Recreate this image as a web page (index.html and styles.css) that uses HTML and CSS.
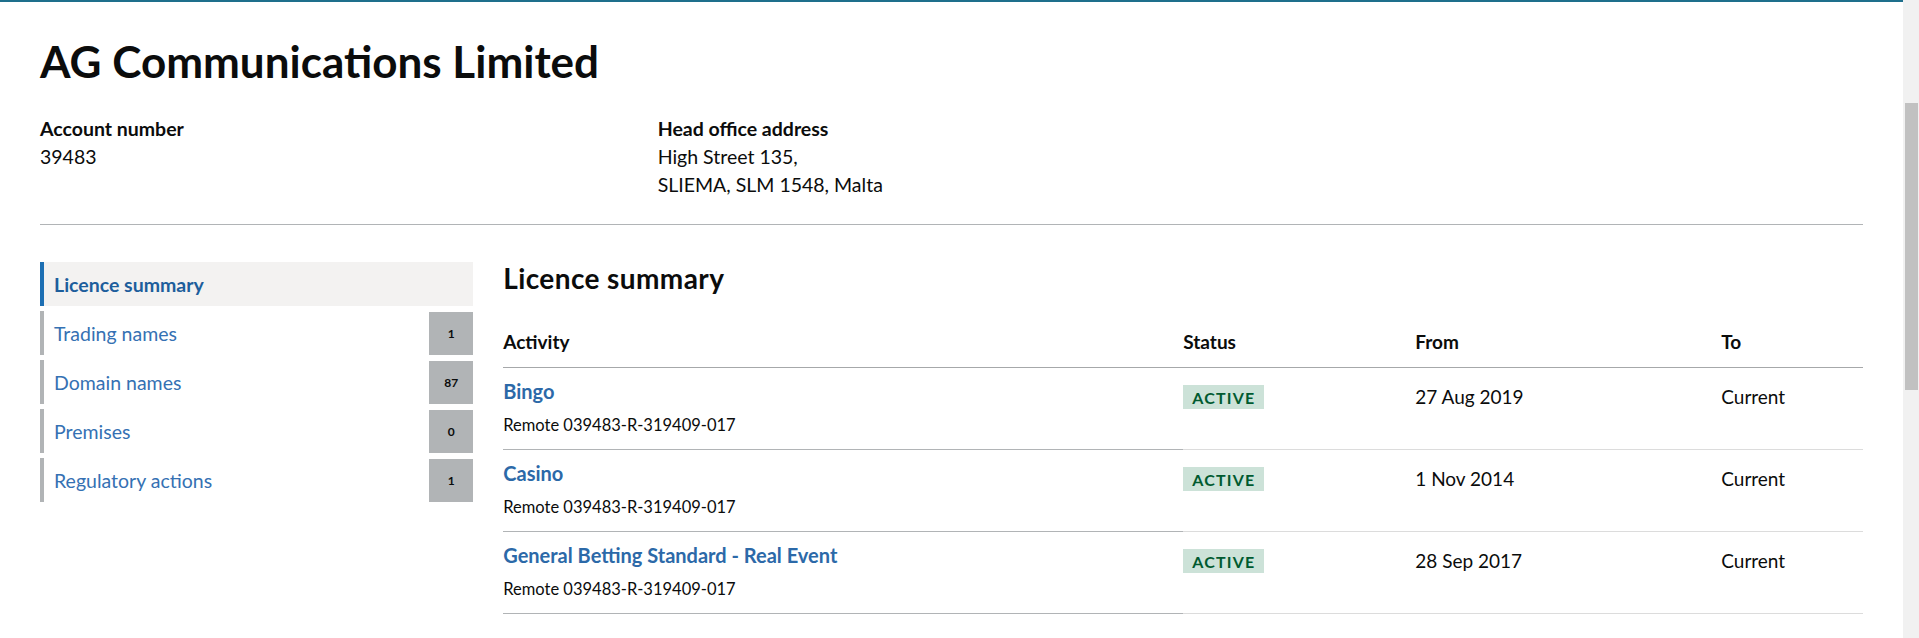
FILE: index.html
```html
<!DOCTYPE html>
<html lang="en">
<head>
<meta charset="utf-8">
<title>AG Communications Limited</title>
<link rel="stylesheet" href="styles.css">
</head>
<body>
<div class="window">
  <div class="page">
    <div class="topbar"></div>
    <div class="container">
      <h1 class="title">AG Communications Limited</h1>
      <div class="details">
        <div class="detail">
          <div class="detail-label">Account number</div>
          <div class="detail-value">39483</div>
        </div>
        <div class="detail">
          <div class="detail-label">Head office address</div>
          <div class="detail-value">High Street 135,<br>SLIEMA, SLM 1548, Malta</div>
        </div>
      </div>
      <hr class="divider">
      <div class="layout">
        <nav class="sidenav">
          <a class="nav-item active" href="#"><span class="nav-text">Licence summary</span></a>
          <a class="nav-item" href="#"><span class="nav-text">Trading names</span><span class="count">1</span></a>
          <a class="nav-item" href="#"><span class="nav-text">Domain names</span><span class="count">87</span></a>
          <a class="nav-item" href="#"><span class="nav-text">Premises</span><span class="count">0</span></a>
          <a class="nav-item" href="#"><span class="nav-text">Regulatory actions</span><span class="count">1</span></a>
        </nav>
        <main class="main">
          <h2 class="section-title">Licence summary</h2>
          <table class="licences">
            <thead>
              <tr>
                <th class="col-activity">Activity</th>
                <th class="col-status">Status</th>
                <th class="col-from">From</th>
                <th class="col-to">To</th>
              </tr>
            </thead>
            <tbody>
              <tr>
                <td class="cell-activity"><a class="activity-link" href="#">Bingo</a><div class="ref">Remote 039483-R-319409-017</div></td>
                <td class="cell-status"><span class="tag">Active</span></td>
                <td class="cell-date">27 Aug 2019</td>
                <td class="cell-date">Current</td>
              </tr>
              <tr>
                <td class="cell-activity"><a class="activity-link" href="#">Casino</a><div class="ref">Remote 039483-R-319409-017</div></td>
                <td class="cell-status"><span class="tag">Active</span></td>
                <td class="cell-date">1 Nov 2014</td>
                <td class="cell-date">Current</td>
              </tr>
              <tr>
                <td class="cell-activity"><a class="activity-link" href="#">General Betting Standard - Real Event</a><div class="ref">Remote 039483-R-319409-017</div></td>
                <td class="cell-status"><span class="tag">Active</span></td>
                <td class="cell-date">28 Sep 2017</td>
                <td class="cell-date">Current</td>
              </tr>
            </tbody>
          </table>
        </main>
      </div>
    </div>
  </div>
  <div class="scrollbar"><div class="thumb"></div></div>
</div>
</body>
</html>
```

FILE: styles.css
```css
html, body {
  margin: 0;
  padding: 0;
  background: #ffffff;
}

body {
  font-family: "Lato", "Noto Sans", sans-serif;
  color: #0b0c0c;
  height: 638px;
  overflow: hidden;
}

.window {
  display: flex;
  height: 638px;
}

.page {
  flex: 1;
  min-width: 0;
}

.topbar {
  height: 2px;
  background: #1e6f8c;
}

.container {
  padding: 0 40px;
}

.title {
  margin: 31px 0 0;
  font-size: 44px;
  line-height: 56px;
  font-weight: 700;
  letter-spacing: 0;
}

.details {
  display: grid;
  grid-template-columns: repeat(3, 1fr);
  column-gap: 30px;
  margin-top: 26px;
}

.detail-label {
  font-size: 19.5px;
  line-height: 28px;
  font-weight: 700;
}

.detail-value {
  font-size: 19.5px;
  line-height: 28px;
}

.divider {
  border: 0;
  border-top: 1px solid #b1b4b6;
  margin: 25px 0 0;
  height: 0;
}

.layout {
  display: grid;
  grid-template-columns: repeat(4, 1fr);
  column-gap: 30px;
  margin-top: 37px;
}

.sidenav {
  display: flex;
  flex-direction: column;
  gap: 5px;
}

.nav-item {
  display: flex;
  align-items: center;
  justify-content: space-between;
  height: 44px;
  border-left: 4px solid #b1b4b6;
  padding-left: 10px;
  text-decoration: none;
  color: #3571b3;
  font-size: 19.5px;
}

.nav-item.active {
  border-left-color: #1d6fb3;
  background: #f3f2f1;
  color: #1d5e9c;
  font-weight: 700;
}

.count {
  width: 44px;
  height: 43px;
  background: #b1b4b6;
  color: #0b0c0c;
  font-size: 12px;
  font-weight: 700;
  display: flex;
  align-items: center;
  justify-content: center;
}

.main {
  grid-column: span 3;
}

.section-title {
  margin: 0;
  font-size: 28px;
  line-height: 32px;
  font-weight: 700;
  letter-spacing: 0.4px;
}

.licences {
  margin-top: 26px;
  width: 100%;
  border-collapse: collapse;
}

.licences th {
  text-align: left;
  font-size: 19px;
  line-height: 26px;
  font-weight: 700;
  padding: 9px 0 12px;
  border-bottom: 1px solid #a6a8aa;
}

.col-activity { width: 680px; }
.col-status { width: 232px; }
.col-from { width: 306px; }

.licences td {
  vertical-align: top;
  padding: 10px 0 12px;
  border-bottom: 1px solid #dcdcdc;
  font-size: 19px;
  line-height: 26px;
}

.licences td.cell-activity {
  border-bottom-color: #b1b4b6;
}

.activity-link {
  display: block;
  color: #2c69a8;
  font-size: 20px;
  font-weight: 700;
  text-decoration: none;
}

.ref {
  margin-top: 9px;
  font-size: 16.5px;
  line-height: 24px;
  color: #0b0c0c;
}

.cell-date {
  padding-top: 16px !important;
}

.tag {
  display: inline-block;
  margin-top: 7px;
  padding: 0 9px;
  height: 24px;
  line-height: 25px;
  background: #cce2d8;
  color: #005a30;
  font-size: 16px;
  font-weight: 700;
  letter-spacing: 1.2px;
  text-transform: uppercase;
}

.scrollbar {
  width: 16px;
  height: 638px;
  background: #f1f1f1;
  display: flex;
  justify-content: center;
}

.thumb {
  width: 13px;
  height: 287px;
  margin-top: 103px;
  background: #c1c1c1;
}
```
